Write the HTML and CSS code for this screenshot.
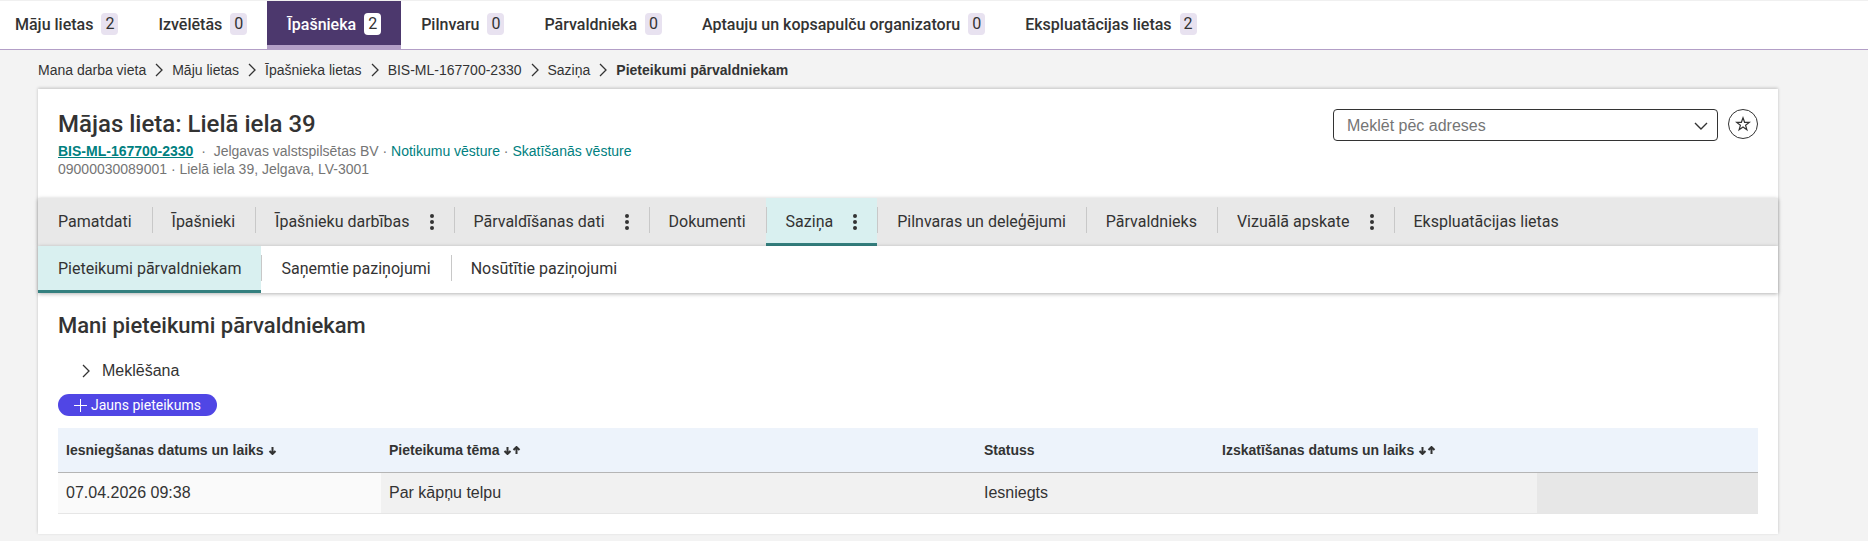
FILE: index.html
```html
<!DOCTYPE html>
<html lang="lv">
<head>
    <meta charset="UTF-8">
    <meta name="viewport" content="width=device-width, initial-scale=1.0">
    <title>Pieteikumi pārvaldniekam</title>
    <link rel="stylesheet" href="styles.css">
</head>
<body>
    <nav class="top-nav">
        <a href="#">Māju lietas <span class="count">2</span></a>
        <a href="#">Izvēlētās <span class="count">0</span></a>
        <a href="#" class="active">Īpašnieka <span class="count">2</span></a>
        <a href="#">Pilnvaru <span class="count">0</span></a>
        <a href="#">Pārvaldnieka <span class="count">0</span></a>
        <a href="#">Aptauju un kopsapulču organizatoru <span class="count">0</span></a>
        <a href="#">Ekspluatācijas lietas <span class="count">2</span></a>
    </nav>

    <div class="page">
        <nav class="breadcrumbs">
            <a href="#">Mana darba vieta</a>
            <svg class="chevron" viewBox="0 0 8 14"><path d="M1 1l6 6-6 6"/></svg>
            <a href="#">Māju lietas</a>
            <svg class="chevron" viewBox="0 0 8 14"><path d="M1 1l6 6-6 6"/></svg>
            <a href="#">Īpašnieka lietas</a>
            <svg class="chevron" viewBox="0 0 8 14"><path d="M1 1l6 6-6 6"/></svg>
            <a href="#">BIS-ML-167700-2330</a>
            <svg class="chevron" viewBox="0 0 8 14"><path d="M1 1l6 6-6 6"/></svg>
            <a href="#">Saziņa</a>
            <svg class="chevron" viewBox="0 0 8 14"><path d="M1 1l6 6-6 6"/></svg>
            <strong>Pieteikumi pārvaldniekam</strong>
        </nav>

        <main class="card">
            <header class="card-header">
                <div>
                    <h1>Mājas lieta: Lielā iela 39</h1>
                    <p class="meta"><a href="#" class="case-number">BIS-ML-167700-2330</a> &nbsp;·&nbsp; Jelgavas valstspilsētas BV · <a href="#">Notikumu vēsture</a> · <a href="#">Skatīšanās vēsture</a></p>
                    <p class="meta">09000030089001 · Lielā iela 39, Jelgava, LV-3001</p>
                </div>
                <div class="header-tools">
                    <div class="address-search">
                        <input type="text" placeholder="Meklēt pēc adreses" aria-label="Meklēt pēc adreses">
                        <svg class="chevron-down" viewBox="0 0 14 8"><path d="M1 1l6 6 6-6"/></svg>
                    </div>
                    <button type="button" class="favorite" aria-label="Pievienot izlasei">
                        <svg viewBox="0 0 16 16"><path d="M8 1.8l1.6 4.5 4.7.1-3.7 2.9 1.3 4.5L8 11.1l-3.9 2.7 1.3-4.5-3.7-2.9 4.7-.1z"/></svg>
                    </button>
                </div>
            </header>

            <nav class="tabs">
                <a href="#">Pamatdati</a>
                <a href="#">Īpašnieki</a>
                <a href="#">Īpašnieku darbības <svg class="dots" viewBox="0 0 4 16"><circle cx="2" cy="2" r="2"/><circle cx="2" cy="8" r="2"/><circle cx="2" cy="14" r="2"/></svg></a>
                <a href="#">Pārvaldīšanas dati <svg class="dots" viewBox="0 0 4 16"><circle cx="2" cy="2" r="2"/><circle cx="2" cy="8" r="2"/><circle cx="2" cy="14" r="2"/></svg></a>
                <a href="#">Dokumenti</a>
                <a href="#" class="active">Saziņa <svg class="dots" viewBox="0 0 4 16"><circle cx="2" cy="2" r="2"/><circle cx="2" cy="8" r="2"/><circle cx="2" cy="14" r="2"/></svg></a>
                <a href="#">Pilnvaras un deleģējumi</a>
                <a href="#">Pārvaldnieks</a>
                <a href="#">Vizuālā apskate <svg class="dots" viewBox="0 0 4 16"><circle cx="2" cy="2" r="2"/><circle cx="2" cy="8" r="2"/><circle cx="2" cy="14" r="2"/></svg></a>
                <a href="#">Ekspluatācijas lietas</a>
            </nav>

            <nav class="tabs sub-tabs">
                <a href="#" class="active">Pieteikumi pārvaldniekam</a>
                <a href="#">Saņemtie paziņojumi</a>
                <a href="#">Nosūtītie paziņojumi</a>
            </nav>

            <section class="content">
                <h2>Mani pieteikumi pārvaldniekam</h2>
                <button type="button" class="search-toggle">
                    <svg class="chevron" viewBox="0 0 8 14"><path d="M1 1l6 6-6 6"/></svg>
                    Meklēšana
                </button>
                <button type="button" class="btn-new">
                    <svg viewBox="0 0 13 13"><path d="M6.5 0v13M0 6.5h13"/></svg>
                    Jauns pieteikums
                </button>

                <table class="applications">
                    <thead>
                        <tr>
                            <th class="col-date">Iesniegšanas datums un laiks <svg class="sort" viewBox="0 0 9 9"><path d="M4.5 1v7M1.5 5l3 3 3-3"/></svg></th>
                            <th class="col-subject">Pieteikuma tēma <svg class="sort" viewBox="0 0 9 9"><path d="M4.5 1v7M1.5 5l3 3 3-3"/></svg><svg class="sort" viewBox="0 0 9 9"><path d="M4.5 8V1M1.5 4l3-3 3 3"/></svg></th>
                            <th class="col-status">Statuss</th>
                            <th class="col-date">Izskatīšanas datums un laiks <svg class="sort" viewBox="0 0 9 9"><path d="M4.5 1v7M1.5 5l3 3 3-3"/></svg><svg class="sort" viewBox="0 0 9 9"><path d="M4.5 8V1M1.5 4l3-3 3 3"/></svg></th>
                            <th></th>
                        </tr>
                    </thead>
                    <tbody>
                        <tr>
                            <td class="sorted">07.04.2026 09:38</td>
                            <td>Par kāpņu telpu</td>
                            <td>Iesniegts</td>
                            <td></td>
                            <td class="actions"></td>
                        </tr>
                    </tbody>
                </table>
            </section>
        </main>
    </div>
</body>
</html>
```

FILE: styles.css
```css
* {
    box-sizing: border-box;
}
body {
    margin: 0;
    background-color: #f3f3f3;
    color: #333;
    font-family: "Liberation Sans", Arial, sans-serif;
    font-size: 16px;
}
a {
    color: inherit;
    text-decoration: none;
}
button {
    color: inherit;
    font-family: inherit;
    cursor: pointer;
}
svg {
    flex: none;
    fill: none;
    stroke: currentColor;
}

/* Top navigation */
.top-nav {
    display: flex;
    height: 50px;
    border-top: 1px solid #f0f0f0;
    border-bottom: 1px solid #b39fc7;
    background-color: #fff;
    font-family: Roboto, sans-serif;
    font-weight: 500;
}
.top-nav a {
    display: flex;
    align-items: center;
    gap: 8px;
    padding: 2px 20px 0;
    border-bottom: 4px solid transparent;
}
.top-nav a:first-child {
    padding-left: 15px;
}
.top-nav a.active {
    border-bottom-color: #b39fc7;
    background-color: #4c386d;
    color: #fff;
}
.count {
    padding: 0 4px;
    border-radius: 4px;
    background-color: #e8e2f0;
    color: #333;
    font-weight: 400;
    line-height: 22px;
}
.active .count {
    background-color: #fff;
}

/* Breadcrumbs */
.page {
    margin: 0 90px 7px 38px;
}
.breadcrumbs {
    display: flex;
    align-items: center;
    gap: 9px;
    height: 39px;
    font-size: 14px;
}
.chevron {
    width: 8px;
    height: 14px;
    stroke-width: 1.3;
}

/* Card */
.card {
    background-color: #fff;
    box-shadow: 0 -1px 3px rgba(0, 0, 0, 0.2);
}
.card-header {
    display: flex;
    justify-content: space-between;
    padding: 20px;
}
.card-header h1 {
    margin: 0 0 2px;
    font-family: Roboto, sans-serif;
    font-size: 24px;
    font-weight: 500;
    line-height: 31px;
}
.meta {
    margin: 0;
    color: #757575;
    font-size: 14px;
    line-height: 18px;
}
.meta a {
    color: #008080;
}
.meta .case-number {
    font-weight: bold;
    text-decoration: underline;
}
.header-tools {
    display: flex;
    align-items: flex-start;
    gap: 10px;
}
.address-search {
    display: flex;
    align-items: center;
    width: 385px;
    height: 32px;
    padding: 1px 9px 0 13px;
    border: 1px solid #333;
    border-radius: 4px;
}
.address-search input {
    flex: 1;
    min-width: 0;
    padding: 0;
    border: none;
    outline: none;
    background: none;
    font-family: inherit;
    font-size: 16px;
}
.address-search input::placeholder {
    color: #757575;
}
.chevron-down {
    width: 14px;
    height: 8px;
    stroke-width: 1.4;
}
.favorite {
    display: flex;
    align-items: center;
    justify-content: center;
    width: 30px;
    height: 30px;
    padding: 0;
    border: 1px solid #333;
    border-radius: 50%;
    background-color: #fff;
}
.favorite svg {
    width: 16px;
    height: 16px;
    stroke-width: 1.2;
}

/* Tabs */
.tabs {
    display: flex;
    height: 48px;
    background-color: #e8e8e8;
    box-shadow: 0 1px 4px rgba(0, 0, 0, 0.3);
    font-family: Roboto, sans-serif;
}
.tabs a {
    position: relative;
    display: flex;
    align-items: center;
    gap: 20px;
    padding: 2px 20px 0;
    border-bottom: 3px solid transparent;
}
.tabs a + a::before {
    content: "";
    position: absolute;
    top: 9px;
    left: 0;
    width: 1px;
    height: 26px;
    background-color: #c8c8c8;
}
.tabs a.active {
    border-bottom-color: #34807f;
    background-color: #d9f0f0;
}
.dots {
    width: 4px;
    height: 16px;
    fill: currentColor;
    stroke: none;
}
.sub-tabs {
    position: relative;
    height: 47px;
    background-color: #fff;
}
.sub-tabs a {
    padding-top: 0;
}

/* Content */
.content {
    display: flex;
    flex-direction: column;
    align-items: flex-start;
    padding: 20px;
}
.content h2 {
    margin: 0;
    font-family: Roboto, sans-serif;
    font-size: 22px;
    font-weight: 500;
    line-height: 26px;
}
.search-toggle {
    display: flex;
    align-items: center;
    gap: 12px;
    margin: 21px 0 12px;
    padding: 0 24px;
    border: none;
    background: none;
    font-size: 16px;
    line-height: 22px;
}
.btn-new {
    display: flex;
    align-items: center;
    gap: 4px;
    height: 22px;
    padding: 0 16px;
    border: none;
    border-radius: 11px;
    background-color: #5046e5;
    color: #fff;
    font-family: Roboto, sans-serif;
    font-size: 14px;
}
.btn-new svg {
    width: 13px;
    height: 13px;
}
.applications {
    width: 100%;
    margin-top: 12px;
    border-spacing: 0;
    table-layout: fixed;
}
.applications th {
    height: 45px;
    padding: 0 8px;
    border-bottom: 1px solid #b5b5b5;
    background-color: #edf3fb;
    font-size: 14px;
    text-align: left;
}
.applications td {
    height: 41px;
    padding: 0 8px;
    border-bottom: 1px solid #e6e6e6;
    background-color: #f1f1f1;
}
.applications td.sorted {
    background-color: #fafafa;
}
.applications td.actions {
    background-color: #e7e7e7;
}
.col-date {
    width: 19%;
}
.col-subject {
    width: 35%;
}
.col-status {
    width: 14%;
}
.sort {
    width: 9px;
    height: 9px;
    stroke-width: 2;
}
```
